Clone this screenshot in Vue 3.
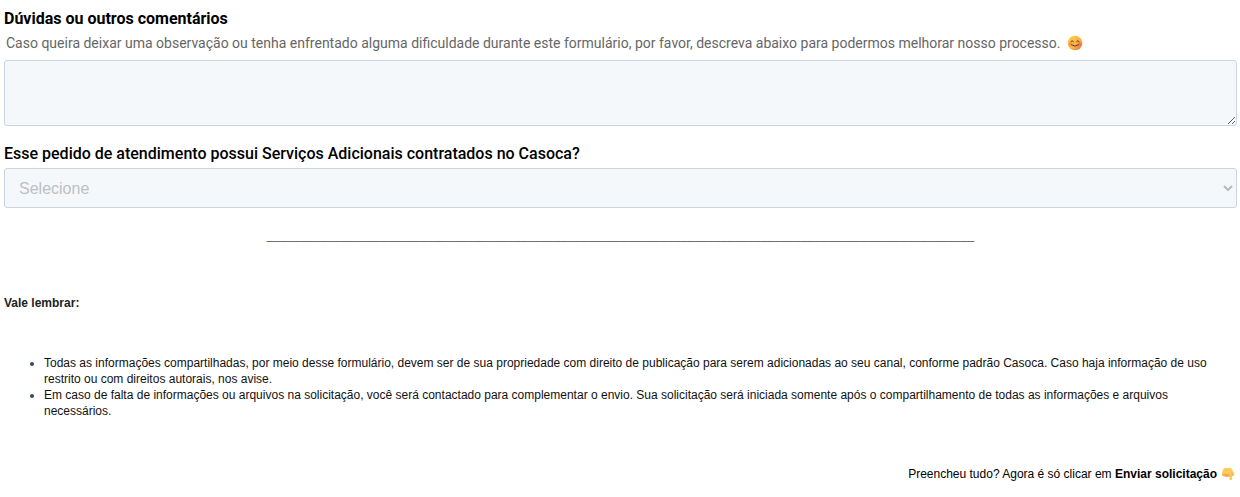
<script setup>
import { ref } from 'vue'

const comments = ref('')
const services = ref('')
const rule = '_'.repeat(106)
</script>

<template>
  <form class="form" @submit.prevent>
    <div class="field">
      <label class="label strong" for="comments">Dúvidas ou outros comentários</label>
      <p id="comments-help" class="help">
        <span>Caso queira deixar uma observação ou tenha enfrentado alguma dificuldade durante este formulário, por favor, descreva abaixo para podermos melhorar nosso processo.</span>
        <svg class="smile" viewBox="0 0 16 16" aria-hidden="true">
          <defs>
            <linearGradient id="face" x1="0" y1="0" x2="1" y2="1">
              <stop offset="0" stop-color="#ffd34a" />
              <stop offset="0.6" stop-color="#fdae40" />
              <stop offset="1" stop-color="#e0604c" />
            </linearGradient>
          </defs>
          <circle cx="8" cy="8" r="7.3" fill="url(#face)" />
          <circle cx="3.4" cy="9.2" r="1.9" fill="#fb7a45" opacity=".6" />
          <circle cx="12.6" cy="9.2" r="1.9" fill="#f4643f" opacity=".6" />
          <path d="M3.8 6.6Q5.1 4.6 6.4 6.6M9.6 6.6Q10.9 4.6 12.2 6.6M4.6 9.9Q8 12.6 11.4 9.9" fill="none" stroke="#5b3340" stroke-width="1" stroke-linecap="round" />
        </svg>
      </p>
      <textarea id="comments" v-model="comments" class="control area" aria-describedby="comments-help"></textarea>
    </div>

    <div class="field">
      <label class="label" for="services">Esse pedido de atendimento possui Serviços Adicionais contratados no Casoca?</label>
      <div class="select-wrap">
        <select id="services" v-model="services" class="control select">
          <option value="" disabled>Selecione</option>
          <option value="sim">Sim</option>
          <option value="nao">Não</option>
        </select>
        <svg class="chevron" viewBox="0 0 10 6" aria-hidden="true">
          <path d="M1 1L5 5L9 1" fill="none" stroke="#b9b9b9" stroke-width="2" />
        </svg>
      </div>
    </div>

    <section class="notes">
      <div class="divider" aria-hidden="true">{{ rule }}</div>
      <h2 class="notes-title">Vale lembrar:</h2>
      <ul class="list">
        <li>Todas as informações compartilhadas, por meio desse formulário, devem ser de sua propriedade com direito de publicação para serem adicionadas ao seu canal, conforme padrão Casoca. Caso haja informação de uso restrito ou com direitos autorais, nos avise.</li>
        <li>Em caso de falta de informações ou arquivos na solicitação, você será contactado para complementar o envio. Sua solicitação será iniciada somente após o compartilhamento de todas as informações e arquivos necessários.</li>
      </ul>
      <p class="closing">
        <span>Preencheu tudo? Agora é só clicar em <strong>Enviar solicitação</strong></span>
        <svg class="hand" viewBox="0 0 14 14" aria-hidden="true">
          <path d="M4 1H9Q10.2 1 11 2.4L13 5.8Q13.6 7.6 12.8 8.8Q11.6 9.4 11.2 8.4V12Q10.9 13.2 9.8 13.2Q8.6 13.2 8.4 12V9.2Q7.4 10.2 6.2 9.4Q4.8 10 3.8 9.2Q1.8 9.8 1 8Q.8 5 2 2.8Q2.8 1.2 4 1Z" fill="#fdcb58" />
          <path d="M1.2 7.6Q2.4 6.2 3.6 7.4Q4.8 6.2 6 7.4Q7.4 6.2 8.4 7.6V9.2Q7.4 10.2 6.2 9.4Q4.8 10 3.8 9.2Q1.8 9.8 1.2 7.6Z" fill="#f8a465" />
          <path d="M11.2 8.4V6.2" fill="none" stroke="#e8a045" stroke-width=".8" />
        </svg>
      </p>
    </section>
  </form>
</template>

<style>
body {
  margin: 0;
  background: #fff;
}
</style>

<style scoped>
.form {
  padding: 9px 3px 8px 4px;
  font-family: Roboto, sans-serif;
  color: #000;
}
.field {
  margin-bottom: 18px;
}
.label {
  display: block;
  font-size: 16px;
  line-height: 20px;
  font-weight: 500;
  margin-bottom: 4px;
}
.strong {
  font-weight: 700;
}
.help {
  display: flex;
  align-items: center;
  gap: 6px;
  margin: 0 0 7px;
  padding-left: 2px;
  font-size: 14px;
  line-height: 20px;
  color: #666;
}
.smile {
  width: 16px;
  height: 16px;
}
.control {
  display: block;
  box-sizing: border-box;
  width: 100%;
  border: 1px solid #cbd6e2;
  border-radius: 3px;
  background: #f5f8fa;
  font-family: "Liberation Sans", Arial, sans-serif;
  font-size: 16px;
}
.area {
  height: 66px;
  padding: 8px 14px;
  resize: vertical;
}
.select-wrap {
  position: relative;
}
.select {
  height: 40px;
  padding: 0 14px;
  appearance: none;
  color: #bfbfbf;
}
.chevron {
  position: absolute;
  right: 4px;
  top: 17px;
  width: 10px;
  height: 6px;
}
.divider {
  padding-top: 1px;
  overflow: hidden;
  text-align: center;
  white-space: nowrap;
  color: #606060;
}
.notes {
  font-family: "Liberation Sans", Arial, sans-serif;
  font-size: 12px;
  line-height: 16px;
}
.notes-title {
  margin: 52px 0 44px;
  font-size: 12px;
  line-height: 16px;
  color: #222;
}
.list {
  margin: 0;
  padding-left: 40px;
  color: #111;
}
.list li::marker {
  color: #33475b;
}
.closing {
  display: flex;
  justify-content: flex-end;
  align-items: center;
  gap: 4px;
  margin: 47px 2px 0 0;
}
.hand {
  width: 14px;
  height: 14px;
}
</style>
